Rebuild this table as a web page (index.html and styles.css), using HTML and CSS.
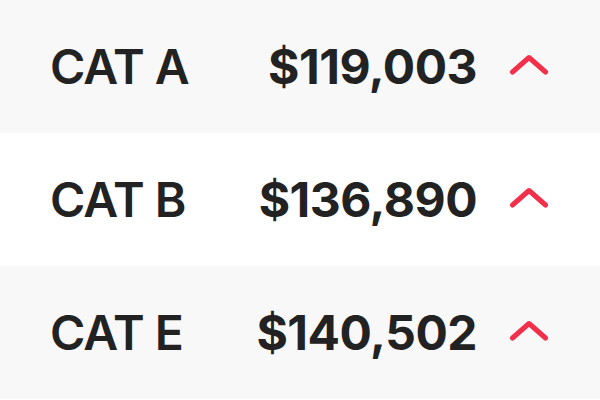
FILE: index.html
```html
<!DOCTYPE html>
<html>
<head>
<meta charset="utf-8">
<link rel="stylesheet" href="styles.css">
</head>
<body>
<ul class="list">
  <li class="row alt">
    <span class="label">CAT A</span>
    <span class="price">$119,003</span>
    <svg class="chev" viewBox="0 0 40 24" width="40" height="24"><polyline points="3.5,19 20,4.5 36.5,19" /></svg>
  </li>
  <li class="row">
    <span class="label">CAT B</span>
    <span class="price">$136,890</span>
    <svg class="chev" viewBox="0 0 40 24" width="40" height="24"><polyline points="3.5,19 20,4.5 36.5,19" /></svg>
  </li>
  <li class="row alt">
    <span class="label">CAT E</span>
    <span class="price">$140,502</span>
    <svg class="chev" viewBox="0 0 40 24" width="40" height="24"><polyline points="3.5,19 20,4.5 36.5,19" /></svg>
  </li>
</ul>
</body>
</html>
```
FILE: styles.css
```css
html, body {
  margin: 0;
  padding: 0;
  background: #ffffff;
}
.list {
  list-style: none;
  margin: 0;
  padding: 0;
  font-family: Inter, "Noto Sans", sans-serif;
  color: #222222;
}
.row {
  height: 133px;
  display: grid;
  grid-template-columns: 1fr auto 38px;
  column-gap: 33px;
  align-items: center;
  padding: 0 52px 0 50px;
  box-sizing: border-box;
}
.alt {
  background: #f8f8f8;
}
.label {
  font-size: 48px;
  font-weight: 600;
  letter-spacing: -1px;
}
.price {
  font-size: 48px;
  font-weight: 700;
  text-align: right;
  letter-spacing: -0.5px;
}
.chev {
  width: 40px;
  height: 24px;
  margin-left: -1px;
  margin-top: -4px;
}
.chev polyline {
  fill: none;
  stroke: #f2304b;
  stroke-width: 5;
  stroke-linecap: round;
  stroke-linejoin: round;
}
```
